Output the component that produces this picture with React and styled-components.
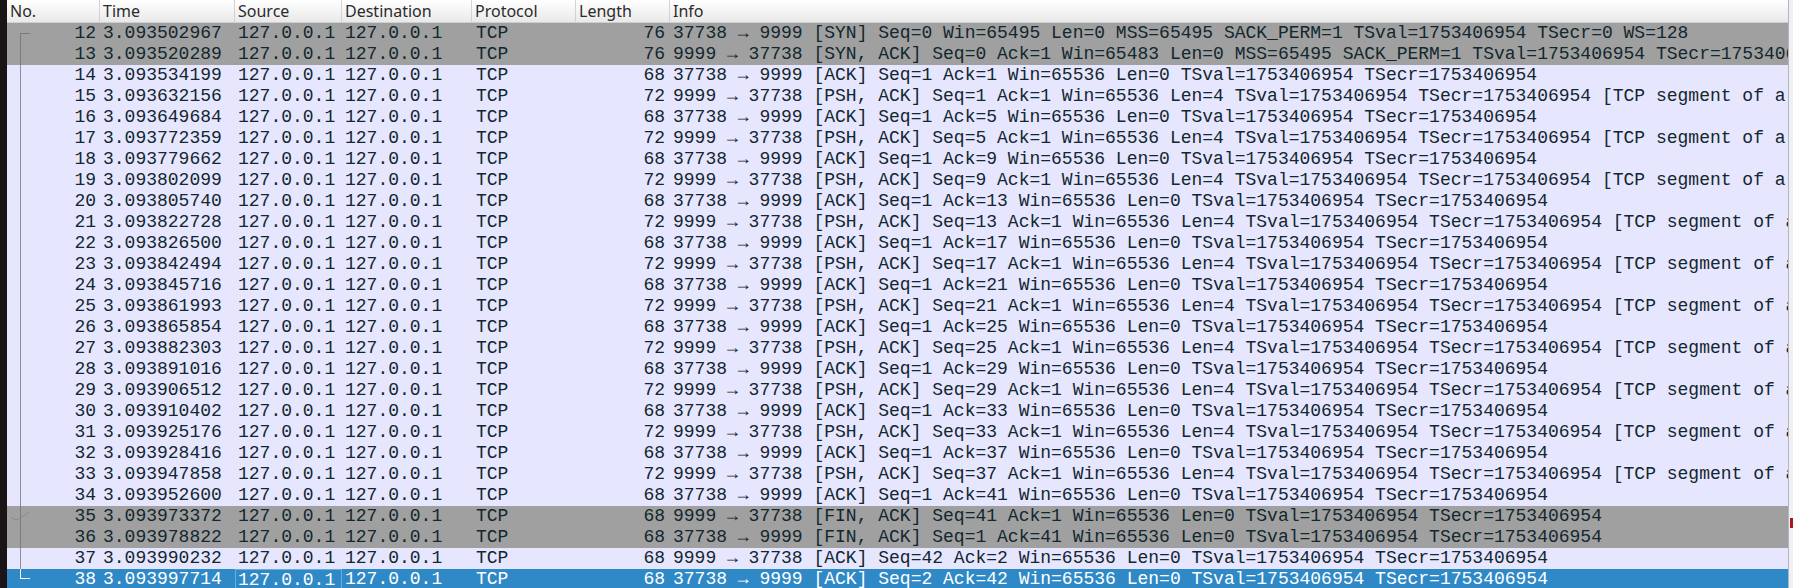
import styled, { createGlobalStyle } from "styled-components";

const GlobalStyle = createGlobalStyle`
    html, body {
        margin: 0;
        padding: 0;
        overflow: hidden;
        background: #e7e6ff;
    }
`;

const COLS = "93px 135px 107px 130px 104px 94px 1fr";
const TS = "TSval=1753406954 TSecr=1753406954";
const UP = "37738 → 9999";
const DOWN = "9999 → 37738";

const rows = [
    { no: 12, time: "3.093502967", len: 76, kind: "dim", info: `${UP} [SYN] Seq=0 Win=65495 Len=0 MSS=65495 SACK_PERM=1 TSval=1753406954 TSecr=0 WS=128` },
    { no: 13, time: "3.093520289", len: 76, kind: "dim", info: `${DOWN} [SYN, ACK] Seq=0 Ack=1 Win=65483 Len=0 MSS=65495 SACK_PERM=1 ${TS} WS=128` },
    { no: 14, time: "3.093534199", len: 68, info: `${UP} [ACK] Seq=1 Ack=1 Win=65536 Len=0 ${TS}` },
    { no: 15, time: "3.093632156", len: 72, info: `${DOWN} [PSH, ACK] Seq=1 Ack=1 Win=65536 Len=4 ${TS} [TCP segment of a reassembled PDU]` },
    { no: 16, time: "3.093649684", len: 68, info: `${UP} [ACK] Seq=1 Ack=5 Win=65536 Len=0 ${TS}` },
    { no: 17, time: "3.093772359", len: 72, info: `${DOWN} [PSH, ACK] Seq=5 Ack=1 Win=65536 Len=4 ${TS} [TCP segment of a reassembled PDU]` },
    { no: 18, time: "3.093779662", len: 68, info: `${UP} [ACK] Seq=1 Ack=9 Win=65536 Len=0 ${TS}` },
    { no: 19, time: "3.093802099", len: 72, info: `${DOWN} [PSH, ACK] Seq=9 Ack=1 Win=65536 Len=4 ${TS} [TCP segment of a reassembled PDU]` },
    { no: 20, time: "3.093805740", len: 68, info: `${UP} [ACK] Seq=1 Ack=13 Win=65536 Len=0 ${TS}` },
    { no: 21, time: "3.093822728", len: 72, info: `${DOWN} [PSH, ACK] Seq=13 Ack=1 Win=65536 Len=4 ${TS} [TCP segment of a reassembled PDU]` },
    { no: 22, time: "3.093826500", len: 68, info: `${UP} [ACK] Seq=1 Ack=17 Win=65536 Len=0 ${TS}` },
    { no: 23, time: "3.093842494", len: 72, info: `${DOWN} [PSH, ACK] Seq=17 Ack=1 Win=65536 Len=4 ${TS} [TCP segment of a reassembled PDU]` },
    { no: 24, time: "3.093845716", len: 68, info: `${UP} [ACK] Seq=1 Ack=21 Win=65536 Len=0 ${TS}` },
    { no: 25, time: "3.093861993", len: 72, info: `${DOWN} [PSH, ACK] Seq=21 Ack=1 Win=65536 Len=4 ${TS} [TCP segment of a reassembled PDU]` },
    { no: 26, time: "3.093865854", len: 68, info: `${UP} [ACK] Seq=1 Ack=25 Win=65536 Len=0 ${TS}` },
    { no: 27, time: "3.093882303", len: 72, info: `${DOWN} [PSH, ACK] Seq=25 Ack=1 Win=65536 Len=4 ${TS} [TCP segment of a reassembled PDU]` },
    { no: 28, time: "3.093891016", len: 68, info: `${UP} [ACK] Seq=1 Ack=29 Win=65536 Len=0 ${TS}` },
    { no: 29, time: "3.093906512", len: 72, info: `${DOWN} [PSH, ACK] Seq=29 Ack=1 Win=65536 Len=4 ${TS} [TCP segment of a reassembled PDU]` },
    { no: 30, time: "3.093910402", len: 68, info: `${UP} [ACK] Seq=1 Ack=33 Win=65536 Len=0 ${TS}` },
    { no: 31, time: "3.093925176", len: 72, info: `${DOWN} [PSH, ACK] Seq=33 Ack=1 Win=65536 Len=4 ${TS} [TCP segment of a reassembled PDU]` },
    { no: 32, time: "3.093928416", len: 68, info: `${UP} [ACK] Seq=1 Ack=37 Win=65536 Len=0 ${TS}` },
    { no: 33, time: "3.093947858", len: 72, info: `${DOWN} [PSH, ACK] Seq=37 Ack=1 Win=65536 Len=4 ${TS} [TCP segment of a reassembled PDU]` },
    { no: 34, time: "3.093952600", len: 68, info: `${UP} [ACK] Seq=1 Ack=41 Win=65536 Len=0 ${TS}` },
    { no: 35, time: "3.093973372", len: 68, kind: "dim", check: true, info: `${DOWN} [FIN, ACK] Seq=41 Ack=1 Win=65536 Len=0 ${TS}` },
    { no: 36, time: "3.093978822", len: 68, kind: "dim", info: `${UP} [FIN, ACK] Seq=1 Ack=41 Win=65536 Len=0 ${TS}` },
    { no: 37, time: "3.093990232", len: 68, info: `${DOWN} [ACK] Seq=42 Ack=2 Win=65536 Len=0 ${TS}` },
    { no: 38, time: "3.093997714", len: 68, kind: "sel", info: `${UP} [ACK] Seq=2 Ack=42 Win=65536 Len=0 ${TS}` },
];

const App = () => {
    return(
        <Frame>
            <GlobalStyle />
            <Edge />
            <Pane>
                <Header>
                    <HeadCell>No.</HeadCell>
                    <HeadCell>Time</HeadCell>
                    <HeadCell>Source</HeadCell>
                    <HeadCell>Destination</HeadCell>
                    <HeadCell>Protocol</HeadCell>
                    <HeadCell>Length</HeadCell>
                    <HeadCell $last>Info</HeadCell>
                </Header>
                {rows.map((r, i) => {
                    const kind = r.kind || "plain";
                    const pos = i === 0 ? "first" : i === rows.length - 1 ? "last" : "mid";
                    return (
                        <Row key={r.no} $kind={kind}>
                            <NoCell>
                                <Tree $pos={pos} $kind={kind} />
                                {r.check && (
                                    <Check viewBox="0 0 20 10">
                                        <polyline points="1,7 7,9 19,1" />
                                    </Check>
                                )}
                                {r.no}
                            </NoCell>
                            <Cell>{r.time}</Cell>
                            <Cell $focus={kind === "sel"}>127.0.0.1</Cell>
                            <Cell>127.0.0.1</Cell>
                            <Cell $pad={4}>TCP</Cell>
                            <Cell $right>{r.len}</Cell>
                            <Cell>{r.info}</Cell>
                        </Row>
                    );
                })}
            </Pane>
            <Scroll>
                <Marker />
            </Scroll>
        </Frame>
    )
};

const Frame = styled.div`
    display: flex;
    width: 100vw;
    height: 588px;
    overflow: hidden;
`;
const Edge = styled.div`
    width: 7px;
    flex: none;
    background: #1a1416;
`;
const Pane = styled.div`
    flex: 1;
    min-width: 0;
    display: flex;
    flex-direction: column;
    background: #e7e6ff;
`;
const Header = styled.div`
    display: grid;
    grid-template-columns: ${COLS};
    height: 22px;
    flex: none;
    border-bottom: 1px solid #cfcfcf;
    background: linear-gradient(#ffffff, #e9e9e9);
`;
const HeadCell = styled.div`
    font-family: "Noto Sans", sans-serif;
    font-size: 16px;
    line-height: 22px;
    color: #2b2b2b;
    padding-left: 3px;
    border-right: ${p => p.$last ? "none" : "1px solid #d2d2d2"};
    white-space: nowrap;
    overflow: hidden;
`;
const bg = { plain: "#e7e6ff", dim: "#a0a0a0", sel: "#2f89c6" };
const Row = styled.div`
    display: grid;
    grid-template-columns: ${COLS};
    height: 21px;
    flex: none;
    background: ${p => bg[p.$kind]};
    color: ${p => p.$kind === "sel" ? "#ffffff" : "#12272e"};
    font-family: "Liberation Mono", "DejaVu Sans Mono", monospace;
    font-size: 18px;
    line-height: 21px;
`;
const Cell = styled.div`
    position: relative;
    padding: 0 ${p => p.$right ? 5 : 0}px 0 ${p => p.$pad || 3}px;
    text-align: ${p => p.$right ? "right" : "left"};
    white-space: pre;
    overflow: hidden;
    box-sizing: border-box;
    border: ${p => p.$focus ? "1px solid #6aaee0" : "none"};
    border-bottom: none;
    line-height: ${p => p.$focus ? "20px" : "21px"};
    padding-left: ${p => p.$focus ? 2 : p.$pad || 3}px;
`;
const NoCell = styled.div`
    position: relative;
    text-align: right;
    padding-right: 4px;
    white-space: nowrap;
`;
const Tree = styled.span`
    position: absolute;
    left: 13px;
    width: 10px;
    top: ${p => p.$pos === "first" ? "10px" : "0"};
    height: ${p => p.$pos === "mid" ? "21px" : p.$pos === "first" ? "11px" : "10px"};
    border-left: 1px solid ${p => p.$kind === "sel" ? "#ffffff" : p.$kind === "dim" ? "#7c7c7c" : "#8f8f9c"};
    border-top: ${p => p.$pos === "first" ? "1px solid #7c7c7c" : "none"};
    border-bottom: ${p => p.$pos === "last" ? "1px solid #ffffff" : "none"};
    box-sizing: border-box;
`;
const Check = styled.svg`
    position: absolute;
    left: 3px;
    top: 5px;
    width: 20px;
    height: 10px;
    fill: none;
    stroke: #8a8a8a;
    stroke-width: 1;
`;
const Scroll = styled.div`
    position: relative;
    width: 4px;
    flex: none;
    border-left: 1px solid #b4b6bd;
    background: #eef0f5;
`;
const Marker = styled.div`
    position: absolute;
    left: 1px;
    right: 0;
    top: 518px;
    height: 10px;
    background: #a8171b;
`;

export default App;
